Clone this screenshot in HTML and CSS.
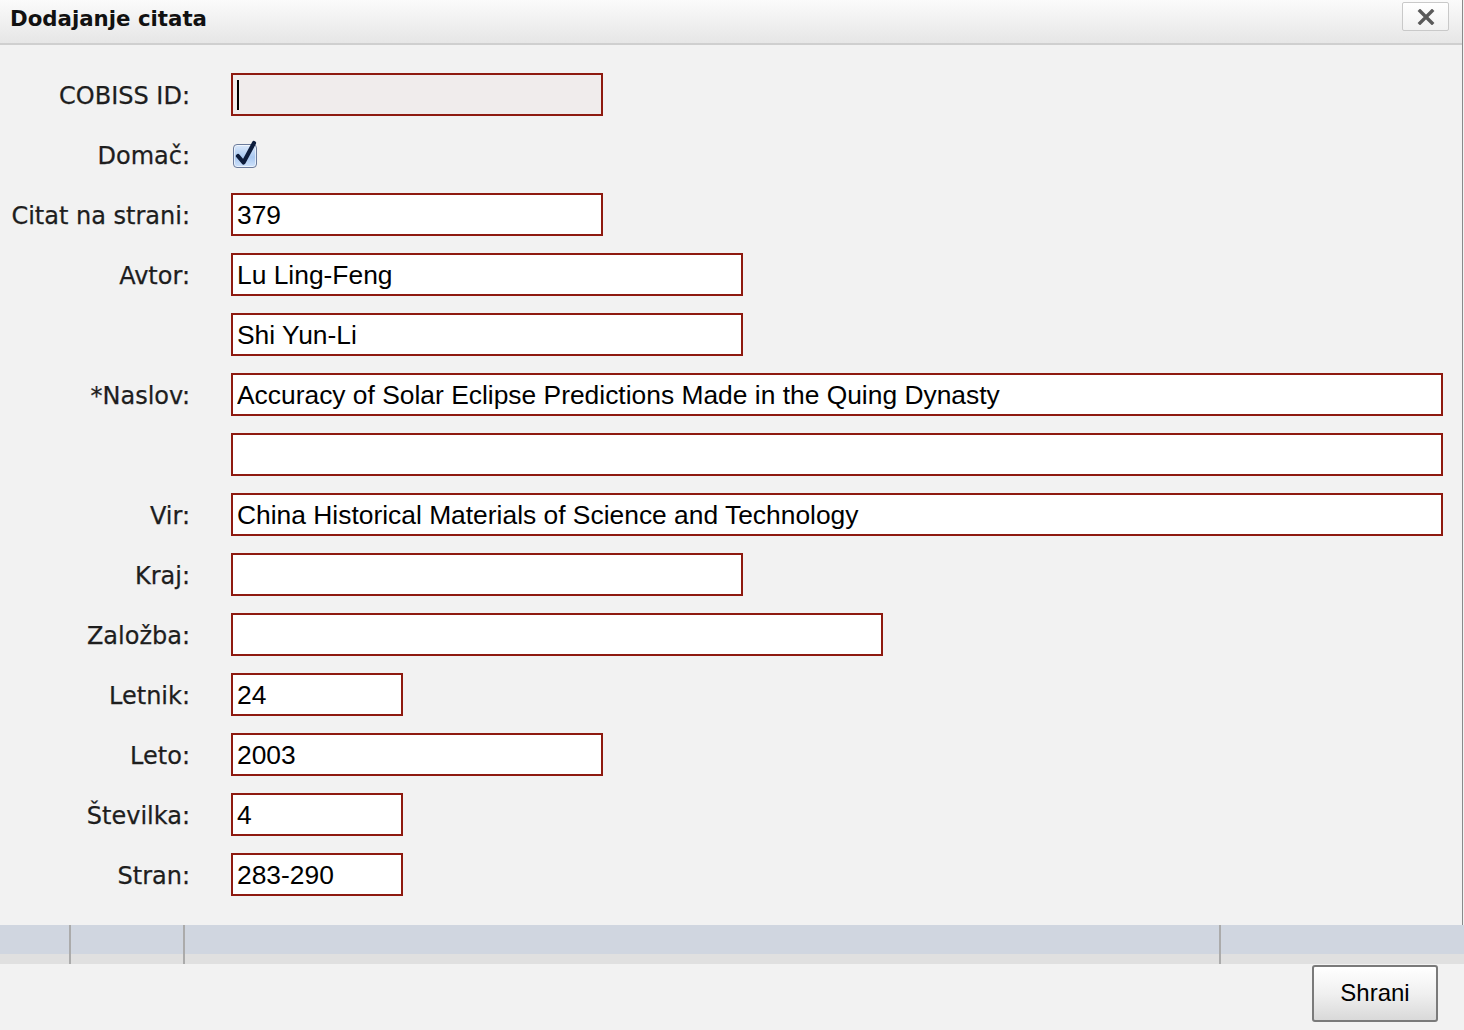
FILE: index.html
```html
<!DOCTYPE html>
<html lang="sl">
<head>
<meta charset="utf-8">
<title>Dodajanje citata</title>
<link rel="stylesheet" href="styles.css">
</head>
<body>
<div class="dialog">
  <div class="titlebar">
    <span class="title">Dodajanje citata</span>
    <button class="close" type="button" aria-label="Zapri">
      <svg width="18" height="16" viewBox="0 0 18 16"><path d="M3 2 L15 14 M15 2 L3 14" stroke="#5a5a5a" stroke-width="3.4" stroke-linecap="square"/></svg>
    </button>
  </div>
  <form class="form">
    <label class="lbl">COBISS ID:</label>
    <div class="field"><span class="caretwrap"><input class="inp w372 focused" type="text" value=""><span class="caret"></span></span></div>

    <label class="lbl">Domač:</label>
    <div class="field">
      <span class="checkbox">
        <svg class="check" width="26" height="30" viewBox="0 0 26 30"><path d="M5 17 L10.5 23.5 L21 4" fill="none" stroke="#0e1d3c" stroke-width="4.2" stroke-linecap="round" stroke-linejoin="round"/></svg>
      </span>
    </div>

    <label class="lbl">Citat na strani:</label>
    <div class="field"><input class="inp w372" type="text" value="379"></div>

    <label class="lbl">Avtor:</label>
    <div class="field"><input class="inp w512" type="text" value="Lu Ling-Feng"></div>

    <span class="lbl"></span>
    <div class="field"><input class="inp w512" type="text" value="Shi Yun-Li"></div>

    <label class="lbl">*Naslov:</label>
    <div class="field"><input class="inp wfull" type="text" value="Accuracy of Solar Eclipse Predictions Made in the Quing Dynasty"></div>

    <span class="lbl"></span>
    <div class="field"><input class="inp wfull" type="text" value=""></div>

    <label class="lbl">Vir:</label>
    <div class="field"><input class="inp wfull" type="text" value="China Historical Materials of Science and Technology"></div>

    <label class="lbl">Kraj:</label>
    <div class="field"><input class="inp w512" type="text" value=""></div>

    <label class="lbl">Založba:</label>
    <div class="field"><input class="inp w652" type="text" value=""></div>

    <label class="lbl">Letnik:</label>
    <div class="field"><input class="inp w172" type="text" value="24"></div>

    <label class="lbl">Leto:</label>
    <div class="field"><input class="inp w372" type="text" value="2003"></div>

    <label class="lbl">Številka:</label>
    <div class="field"><input class="inp w172" type="text" value="4"></div>

    <label class="lbl">Stran:</label>
    <div class="field"><input class="inp w172" type="text" value="283-290"></div>
  </form>
</div>
<div class="band">
  <div class="bandrow">
    <div class="cell c1"></div>
    <div class="cell c2"></div>
    <div class="cell c3"></div>
    <div class="cell c4"></div>
  </div>
</div>
<div class="footer">
  <button class="save" type="button">Shrani</button>
</div>
</body>
</html>
```

FILE: styles.css
```css
html, body {
  margin: 0;
  padding: 0;
  background: #f2f2f2;
  width: 1464px;
  height: 1030px;
  overflow: hidden;
}

.dialog {
  width: 1462px;
  border-right: 1px solid #8a8a8a;
  background: #f2f2f2;
}

.titlebar {
  box-sizing: border-box;
  height: 45px;
  border-bottom: 2px solid #cfcfcf;
  background: linear-gradient(#fbfbfb, #e6e6e6);
  display: flex;
  align-items: center;
  justify-content: space-between;
  padding: 0 13px 0 10px;
}

.title {
  font-family: "DejaVu Sans", Verdana, sans-serif;
  font-weight: bold;
  font-size: 21.3px;
  color: #111;
  margin-top: -6px;
}

.close {
  width: 47px;
  height: 29px;
  margin-top: -10px;
  border: 1px solid #c9c9c9;
  border-radius: 2px;
  background: linear-gradient(#ffffff, #f2f2f2);
  display: flex;
  align-items: center;
  justify-content: center;
  padding: 0;
}

.form {
  display: grid;
  grid-template-columns: 190px 1fr;
  column-gap: 41px;
  row-gap: 17px;
  padding: 28px 20px 29px 0;
  margin: 0;
}

.lbl {
  font-family: "DejaVu Sans", Verdana, sans-serif;
  font-size: 24px;
  color: #1e1e1e;
  text-align: right;
  height: 43px;
  line-height: 47px;
  padding-right: 0;
  -webkit-text-stroke: 0.25px #1e1e1e;
}

.field {
  height: 43px;
  display: flex;
  align-items: center;
}

.inp {
  box-sizing: border-box;
  height: 43px;
  border: 2px solid #8e1a10;
  background: #ffffff;
  font-family: "Liberation Sans", Arial, sans-serif;
  font-size: 26.4px;
  color: #000;
  padding: 1px 4px 0 4px;
  margin: 0;
  outline: none;
  border-radius: 0;
}

.focused { background: #f0ecec; }

.w172 { width: 172px; }
.w372 { width: 372px; }
.w512 { width: 512px; }
.w652 { width: 652px; }
.wfull { width: 1212px; }

.caretwrap {
  position: relative;
  display: inline-block;
  height: 43px;
}

.caret {
  position: absolute;
  left: 6px;
  top: 7px;
  width: 2px;
  height: 30px;
  background: #000;
}

.checkbox {
  position: relative;
  display: inline-block;
  width: 22px;
  height: 22px;
  margin-left: 2px;
  margin-top: 3px;
  border: 1px solid #6b7b9b;
  border-radius: 4px;
  background: linear-gradient(#dbe9fb, #a9c8f0 55%, #cfe2fb);
  box-shadow: inset 0 0 0 1px rgba(255,255,255,0.6);
}

.check {
  position: absolute;
  left: -1px;
  top: -6px;
}

.band {
  height: 39px;
}

.bandrow {
  display: flex;
  height: 39px;
  background: linear-gradient(#d0d6e0 0, #d0d6e0 29px, #e0e0e0 29px);
}

.cell {
  height: 39px;
  box-sizing: border-box;
}

.c1 { width: 71px; border-right: 2px solid #ababab; }
.c2 { width: 114px; border-right: 2px solid #ababab; }
.c3 { width: 1036px; border-right: 2px solid #ababab; }
.c4 { flex: 1; }

.footer {
  display: flex;
  justify-content: flex-end;
  padding: 1px 26px 0 0;
}

.save {
  width: 126px;
  height: 57px;
  border: 2px solid #7a7a7a;
  border-radius: 3px;
  background: linear-gradient(#ffffff, #f0f0f0 50%, #d9d9d9);
  font-family: "Liberation Sans", Arial, sans-serif;
  font-size: 24px;
  color: #000;
  padding: 0 0 2px 0;
}
```
